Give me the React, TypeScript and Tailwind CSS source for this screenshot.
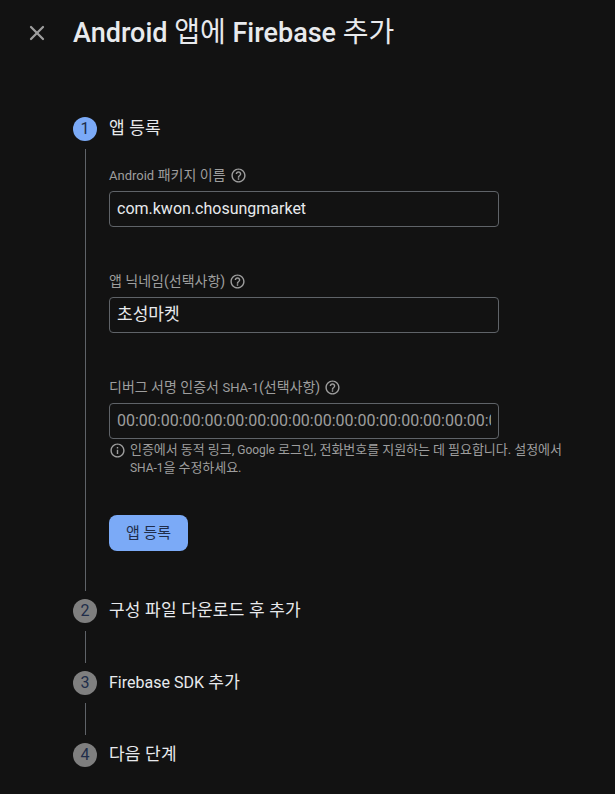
import React from 'react';
import { X } from 'lucide-react';

const font = { fontFamily: 'Roboto, "Noto Sans CJK KR", sans-serif' };

function HelpIcon() {
  return (
    <svg viewBox="0 0 24 24" className="w-[17px] h-[17px] fill-[#9e9e9e] shrink-0">
      <path d="M11 18h2v-2h-2v2zm1-16C6.48 2 2 6.48 2 12s4.48 10 10 10 10-4.48 10-10S17.52 2 12 2zm0 18c-4.41 0-8-3.59-8-8s3.59-8 8-8 8 3.59 8 8-3.59 8-8 8zm0-14c-2.21 0-4 1.79-4 4h2c0-1.1.9-2 2-2s2 .9 2 2c0 2-3 1.75-3 5h2c0-2.25 3-2.5 3-5 0-2.21-1.79-4-4-4z" />
    </svg>
  );
}

function InfoIcon() {
  return (
    <svg viewBox="0 0 24 24" className="w-[17px] h-[17px] fill-[#9e9e9e] shrink-0 mt-[1px]">
      <path d="M11 7h2v2h-2V7zm0 4h2v6h-2v-6zm1-9C6.48 2 2 6.48 2 12s4.48 10 10 10 10-4.48 10-10S17.52 2 12 2zm0 18c-4.41 0-8-3.59-8-8s3.59-8 8-8 8 3.59 8 8-3.59 8-8 8z" />
    </svg>
  );
}

function Field({ label, value, muted }: { label: React.ReactNode; value: React.ReactNode; muted?: boolean }) {
  return (
    <div>
      <div className="flex items-center gap-[4px] h-4 mb-2 text-[14px] text-[#9e9e9e]">
        <span>{label}</span>
        <HelpIcon />
      </div>
      <div className="w-[390px] h-9 border border-[#5f6368] rounded-[4px] px-[7px] flex items-center overflow-hidden">
        <span className={`whitespace-nowrap overflow-hidden w-full text-[16px] ${muted ? 'text-[#9e9e9e]' : 'text-[#e8eaed]'}`}>
          {value}
        </span>
      </div>
    </div>
  );
}

function Step({ n, title, active, last, children }: { n: number; title: React.ReactNode; active?: boolean; last?: boolean; children?: React.ReactNode }) {
  return (
    <div className="flex gap-3">
      <div className="w-6 flex flex-col items-center shrink-0">
        <div className={`w-6 h-6 rounded-full flex items-center justify-center text-[16px] text-[#202d4a] ${active ? 'bg-[#7baaf7]' : 'bg-[#7f7f7f]'}`}>
          {n}
        </div>
        {!last && <div className="w-px flex-1 bg-[#5f6368] my-2" />}
      </div>
      <div className={last ? '' : 'pb-12'}>
        <div className="h-6 flex items-center text-[17px] tracking-[0.2px] text-[#e8eaed]">
          <span>{title}</span>
        </div>
        {children}
      </div>
    </div>
  );
}

export default function App() {
  return (
    <div className="w-[615px] h-[794px] bg-[#121212] overflow-hidden" style={font}>
      <header className="flex items-center h-[66px] pl-[25px]">
        <X className="w-6 h-6 text-[#9e9e9e]" strokeWidth={2.25} />
        <h1 className="ml-6 text-[27px] text-[#e8eaed]">
          <span className="font-medium">Android</span> <span className="text-[28px]">앱에</span> <span className="font-medium">Firebase</span> <span className="text-[28px]">추가</span>
        </h1>
      </header>

      <div className="pl-[73px] pt-[51px]">
        <Step n={1} title="앱 등록" active>
          <div className="pt-[26px] flex flex-col gap-[46px]">
            <Field label={<><span className="text-[13px]">Android</span> 패키지 이름</>} value="com.kwon.chosungmarket" />
            <Field label="앱 닉네임(선택사항)" value={<span className="text-[17px]">초성마켓</span>} />
            <div>
              <Field
                label={<>디버그 서명 인증서 <span className="text-[13px]">SHA-1</span>(선택사항)</>}
                value="00:00:00:00:00:00:00:00:00:00:00:00:00:00:00:00:00:00:00:00"
                muted
              />
              <div className="flex gap-[4px] mt-[2px] w-[456px] text-[13px] leading-[17px] tracking-[-0.05px] text-[#9e9e9e]">
                <InfoIcon />
                <p>인증에서 동적 링크, <span className="text-[12px]">Google</span> 로그인, 전화번호를 지원하는 데 필요합니다. 설정에서 <span className="text-[12px]">SHA-1</span>을 수정하세요.</p>
              </div>
            </div>
          </div>
          <button className="mt-[38px] w-[79px] h-9 rounded-[8px] bg-[#7baaf7] text-[15px] text-[#202d4a]">앱 등록</button>
        </Step>
        <Step n={2} title="구성 파일 다운로드 후 추가" />
        <Step n={3} title={<><span className="text-[16px] tracking-normal">Firebase SDK</span> 추가</>} />
        <Step n={4} title="다음 단계" last />
      </div>
    </div>
  );
}
